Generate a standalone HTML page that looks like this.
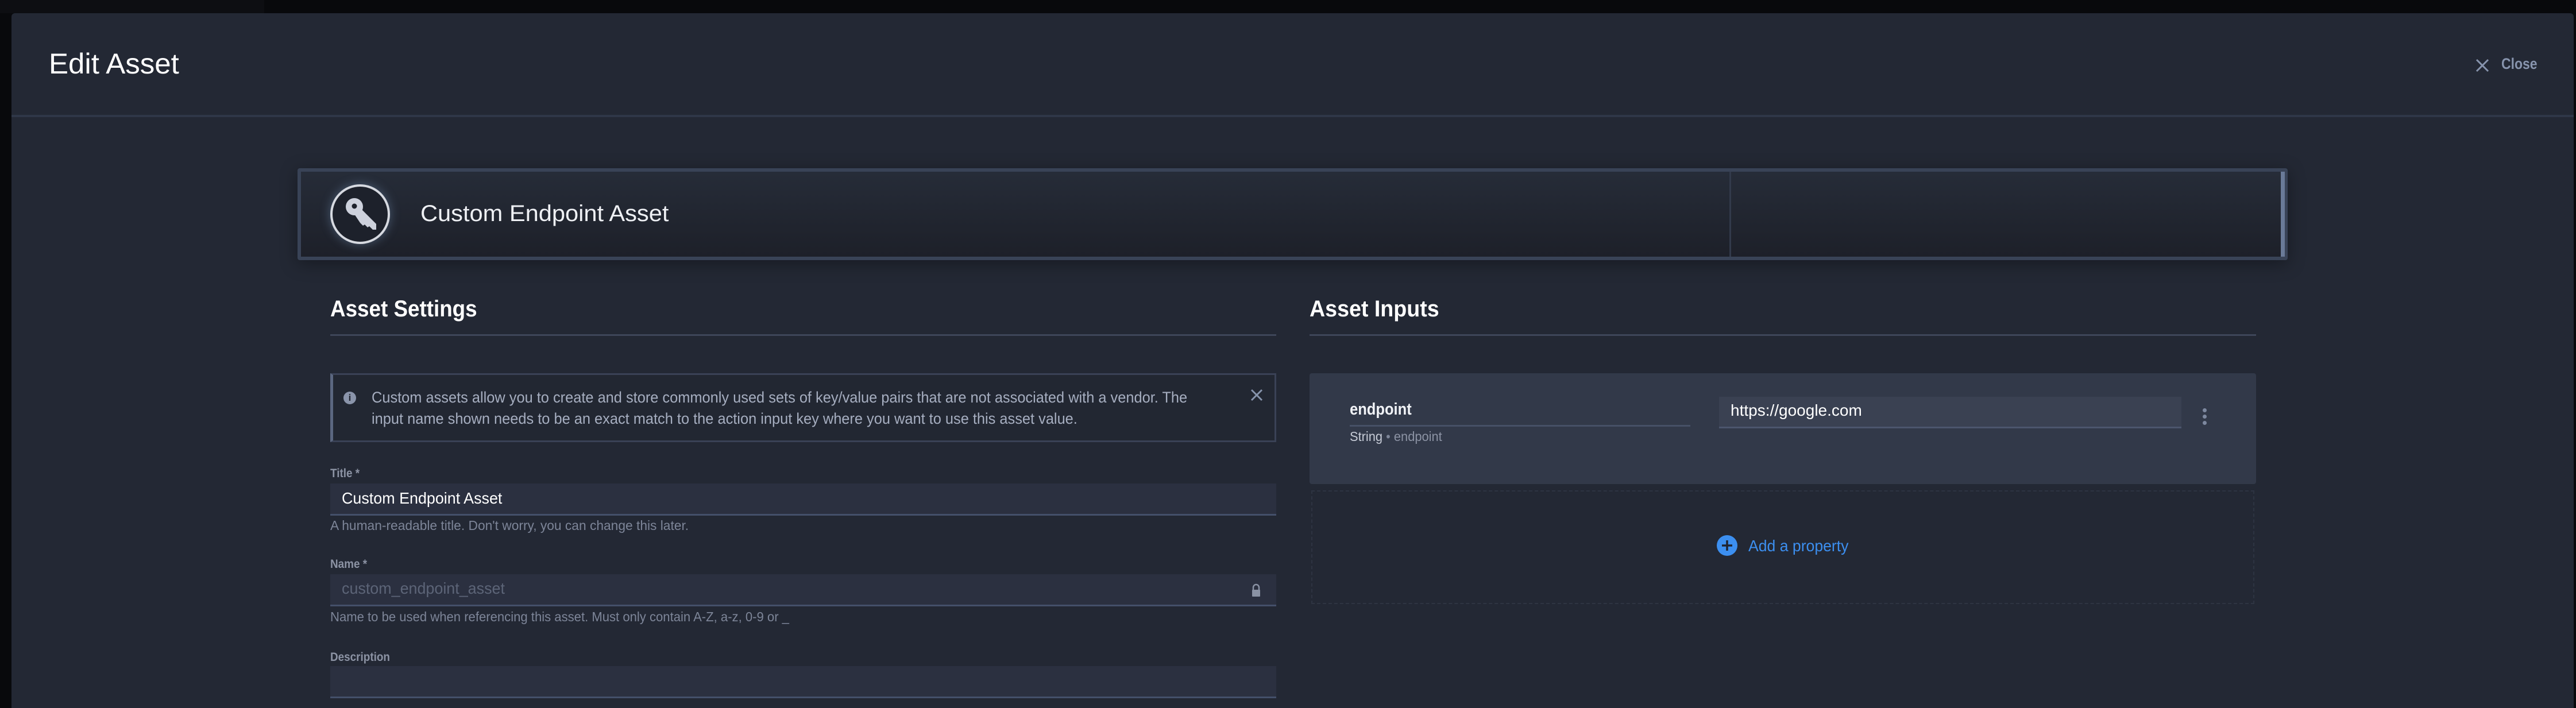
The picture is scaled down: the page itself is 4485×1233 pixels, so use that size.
<!DOCTYPE html>
<html><head><style>
*{margin:0;padding:0;box-sizing:border-box}
body{width:4485px;height:1233px;background:#08090c;position:relative;overflow:hidden;font-family:"Liberation Sans",sans-serif}
.a{position:absolute}
.modal{left:20px;top:23px;width:4461px;height:1210px;background:#232834;border-radius:6px 6px 0 0}
.t{white-space:nowrap;transform-origin:0 50%}
</style></head><body>
<div class="a" style="left:0;top:0;width:460px;height:23px;background:#0d0e12"></div>
<div class="a modal"></div>
<div class="a t" style="left:85px;top:82px;font-size:50px;color:#fff;transform:scaleX(1.02)">Edit Asset</div>
<svg class="a" style="left:4309px;top:101px" width="26" height="26" viewBox="0 0 26 26"><path d="M3 3L23 23M23 3L3 23" stroke="#8794ad" stroke-width="3"/></svg>
<div class="a t" style="left:4355px;top:96px;font-size:27px;font-weight:bold;color:#8794ad;transform:scaleX(.85)">Close</div>
<div class="a" style="left:20px;top:200px;width:4461px;height:4px;background:#2f3748"></div>

<div class="a" style="left:518px;top:293px;width:3465px;height:160px;background:linear-gradient(#262c38,#1d2029);border:6px solid #394357;border-radius:4px;box-shadow:0 6px 30px rgba(0,0,0,.35)"></div>
<div class="a" style="left:3011px;top:299px;width:3px;height:148px;background:#323a4b"></div>
<div class="a" style="left:3971px;top:299px;width:7px;height:148px;background:#6a7a98"></div>
<div class="a" style="left:575px;top:321px;width:104px;height:104px;border-radius:50%;border:4px solid #d6d9e0;background:#1d212b;box-shadow:0 0 18px rgba(120,150,190,.45)"></div>
<svg class="a" style="left:595px;top:340px" width="70" height="70" viewBox="0 0 70 70"><circle cx="22" cy="20" r="15" fill="#cdd1dc"/><circle cx="22" cy="19" r="4.5" fill="#1d212b"/><path d="M20 30L32 22L60 50L60 60L54 60L48 54L45 56L40 51L37 53L32 48Z" fill="#cdd1dc"/></svg>
<div class="a t" style="left:732px;top:350px;font-size:40px;color:#eef0f4;transform:scaleX(1.04)">Custom Endpoint Asset</div>

<div class="a t" style="left:575px;top:516px;font-size:40px;font-weight:bold;color:#fff;transform:scaleX(.92)">Asset Settings</div>
<div class="a" style="left:575px;top:582px;width:1647px;height:3px;background:#3e4659"></div>
<div class="a t" style="left:2280px;top:516px;font-size:40px;font-weight:bold;color:#fff;transform:scaleX(.94)">Asset Inputs</div>
<div class="a" style="left:2280px;top:582px;width:1648px;height:3px;background:#3e4659"></div>

<div class="a" style="left:575px;top:650px;width:1647px;height:120px;border:3px solid #3a4256;border-left:5px solid #5b6780;background:#222732"></div>
<div class="a" style="left:598px;top:682px;width:22px;height:22px;border-radius:50%;background:#8a94aa;color:#222732;font-size:17px;font-weight:bold;text-align:center;line-height:22px">i</div>
<div class="a t" style="left:647px;top:674px;font-size:27px;color:#a6aec0;line-height:37px;transform:scaleX(.94)">Custom assets allow you to create and store commonly used sets of key/value pairs that are not associated with a vendor. The<br>input name shown needs to be an exact match to the action input key where you want to use this asset value.</div>
<svg class="a" style="left:2177px;top:677px" width="22" height="22"><path d="M2 2L20 20M20 2L2 20" stroke="#8794ad" stroke-width="3"/></svg>

<div class="a t" style="left:575px;top:813px;font-size:21px;font-weight:bold;color:#8c93a4;transform:scaleX(.9)">Title *</div>
<div class="a" style="left:575px;top:842px;width:1647px;height:56px;background:#2b3040;border-bottom:3px solid #44506a"></div>
<div class="a t" style="left:595px;top:852px;font-size:28px;color:#fff;transform:scaleX(.96)">Custom Endpoint Asset</div>
<div class="a t" style="left:575px;top:902px;font-size:23px;color:#7d8598;transform:scaleX(.99)">A human-readable title. Don't worry, you can change this later.</div>

<div class="a t" style="left:575px;top:971px;font-size:21px;font-weight:bold;color:#8c93a4;transform:scaleX(.9)">Name *</div>
<div class="a" style="left:575px;top:1000px;width:1647px;height:56px;background:#2b3040;border-bottom:3px solid #44506a"></div>
<div class="a t" style="left:595px;top:1009px;font-size:28px;color:#5c6477;transform:scaleX(.96)">custom_endpoint_asset</div>
<svg class="a" style="left:2179px;top:1016px" width="16" height="24"><path d="M3 11V7a5 5 0 0 1 10 0v4" stroke="#8a92a4" stroke-width="2.5" fill="none"/><rect x="1" y="11" width="14" height="12" rx="1" fill="#8a92a4"/></svg>
<div class="a t" style="left:575px;top:1061px;font-size:23px;color:#7d8598;transform:scaleX(.96)">Name to be used when referencing this asset. Must only contain A-Z, a-z, 0-9 or _</div>

<div class="a t" style="left:575px;top:1133px;font-size:21px;font-weight:bold;color:#8c93a4;transform:scaleX(.9)">Description</div>
<div class="a" style="left:575px;top:1160px;width:1647px;height:56px;background:#2b3040;border-bottom:3px solid #44506a"></div>

<div class="a" style="left:2280px;top:650px;width:1648px;height:193px;background:#323949;border-radius:4px"></div>
<div class="a t" style="left:2350px;top:697px;font-size:29px;font-weight:bold;color:#f0f2f6;transform:scaleX(.88)">endpoint</div>
<div class="a" style="left:2350px;top:740px;width:593px;height:3px;background:#465066"></div>
<div class="a t" style="left:2350px;top:747px;font-size:23px;color:#c6cbd6;transform:scaleX(.95)">String <span style="color:#7d8598">•</span> <span style="color:#8c93a4">endpoint</span></div>
<div class="a" style="left:2993px;top:691px;width:805px;height:55px;background:#3a4152;border-bottom:3px solid #4c566d"></div>
<div class="a t" style="left:3013px;top:699px;font-size:28px;color:#fff;transform:scaleX(1.0)">https://google.com</div>
<div class="a" style="left:3835px;top:711px;width:7px;height:7px;border-radius:50%;background:#7d889f;box-shadow:0 11px 0 #7d889f,0 22px 0 #7d889f"></div>

<div class="a" style="left:2283px;top:854px;width:1642px;height:198px;border:2px dashed #2e3442"></div>
<div class="a" style="left:2989px;top:932px;width:36px;height:36px;border-radius:50%;background:#3c8ff0"></div>
<svg class="a" style="left:2989px;top:932px" width="36" height="36"><path d="M18 9V27M9 18H27" stroke="#1e2330" stroke-width="3.5"/></svg>
<div class="a t" style="left:3044px;top:935px;font-size:28px;color:#3c8ff0;transform:scaleX(.95)">Add a property</div>
</body></html>
